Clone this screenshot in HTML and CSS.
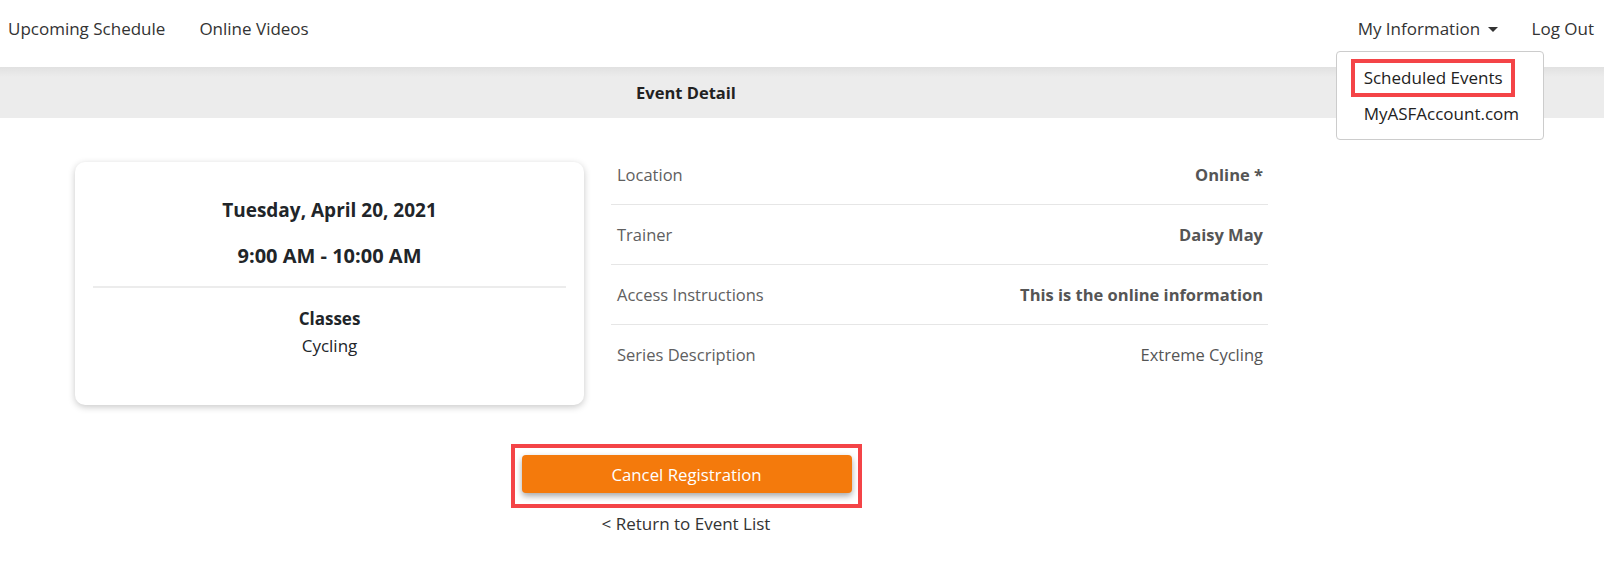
FILE: index.html
```html
<!DOCTYPE html>
<html lang="en">

<head>
    <meta charset="UTF-8">
    <meta name="viewport" content="width=device-width, initial-scale=1.0">
    <title>Event Detail</title>
    <link rel="stylesheet" href="styles.css">
</head>

<body>
    <nav class="topbar">
        <div class="nav-left">
            <a href="#" class="nav-link">Upcoming Schedule</a>
            <a href="#" class="nav-link">Online Videos</a>
        </div>
        <div class="nav-right">
            <div class="nav-menu">
                <a href="#" class="nav-link">My Information <span class="caret"></span></a>
                <div class="dropdown">
                    <div class="highlight highlight-menu">
                        <a href="#" class="dropdown-item">Scheduled Events</a>
                    </div>
                    <a href="#" class="dropdown-item">MyASFAccount.com</a>
                </div>
            </div>
            <a href="#" class="nav-link">Log Out</a>
        </div>
    </nav>

    <header class="page-title">
        <div class="container">
            <h1 class="page-title-text">Event Detail</h1>
        </div>
    </header>

    <main class="container">
        <div class="detail-row">
            <div class="event-card">
                <div class="event-date">Tuesday, April 20, 2021</div>
                <div class="event-time">9:00 AM - 10:00 AM</div>
                <hr class="card-divider">
                <div class="event-type">Classes</div>
                <div class="event-name">Cycling</div>
            </div>

            <table class="info-table">
                <tr>
                    <td class="info-label">Location</td>
                    <td class="info-value strong">Online *</td>
                </tr>
                <tr>
                    <td class="info-label">Trainer</td>
                    <td class="info-value strong">Daisy May</td>
                </tr>
                <tr>
                    <td class="info-label">Access Instructions</td>
                    <td class="info-value strong">This is the online information</td>
                </tr>
                <tr>
                    <td class="info-label">Series Description</td>
                    <td class="info-value">Extreme Cycling</td>
                </tr>
            </table>
        </div>

        <div class="actions">
            <div class="highlight highlight-btn">
                <button type="button" class="cancel-btn">Cancel Registration</button>
            </div>
            <a href="#" class="return-link">&lt; Return to Event List</a>
        </div>
    </main>
</body>

</html>
```

FILE: styles.css
```css
body {
    margin: 0;
    font-family: "Open Sans", "Noto Sans", sans-serif;
    font-size: 17px;
    color: #333;
    background: #fff;
}

a {
    color: inherit;
    text-decoration: none;
}

.topbar {
    height: 56px;
    display: flex;
    justify-content: space-between;
    align-items: center;
    padding: 0 10px 0 8px;
}

.nav-left,
.nav-right {
    display: flex;
    align-items: center;
    gap: 34px;
}

.nav-link {
    color: #333;
    white-space: nowrap;
}

.nav-menu {
    position: relative;
}

.caret {
    display: inline-block;
    width: 0;
    height: 0;
    margin-left: 3px;
    vertical-align: 3px;
    border-left: 5px solid transparent;
    border-right: 5px solid transparent;
    border-top: 5px solid #333;
}

.dropdown {
    position: absolute;
    top: 34px;
    left: -22px;
    width: 206px;
    padding: 7px 0 8px;
    background: #fff;
    border: 1px solid #ccc;
    border-radius: 4px;
    z-index: 10;
}

.dropdown-item {
    display: block;
    padding: 6px 27px;
    line-height: 22px;
    color: #222;
    white-space: nowrap;
}

.highlight {
    border: 4px solid #f44447;
}

.highlight-menu {
    margin: 0 28px 0 14px;
}

.highlight-menu .dropdown-item {
    padding: 4px 9px;
    line-height: 22px;
}

.container {
    width: 1222px;
    margin-left: 75px;
}

.page-title {
    margin-top: 11px;
    height: 51px;
    display: flex;
    align-items: center;
    background: linear-gradient(#e1e1e1, #ececec 10px);
}

.page-title-text {
    margin: 0;
    text-align: center;
    font-size: 16.5px;
    font-weight: 700;
    color: #222;
}

.detail-row {
    display: flex;
    align-items: flex-start;
    gap: 27px;
    margin-top: 27px;
}

.event-card {
    width: 509px;
    box-sizing: border-box;
    margin-top: 17px;
    padding: 34px 18px 46px;
    border-radius: 10px;
    box-shadow: 0 2px 7px rgba(0, 0, 0, 0.22);
    text-align: center;
    color: #212529;
}

.event-date,
.event-time {
    font-size: 19px;
    font-weight: 700;
    line-height: 28px;
}

.event-time {
    margin-top: 18px;
    font-size: 20px;
}

.card-divider {
    margin: 16px 0 17px;
    border: 0;
    border-top: 2px solid #ececec;
}

.event-type {
    font-weight: 700;
    line-height: 27px;
}

.event-name {
    line-height: 27px;
}

.info-table {
    width: 657px;
    border-collapse: collapse;
    font-size: 16.5px;
    color: #555;
}

.info-table td {
    height: 59px;
    padding: 0 5px 0 6px;
    border-bottom: 1px solid #e6e6e6;
}

.info-table tr:last-child td {
    border-bottom: 0;
}

.info-label {
    color: #606060;
}

.info-value {
    text-align: right;
}

.strong {
    font-weight: 700;
}

.actions {
    display: flex;
    flex-direction: column;
    align-items: center;
    margin-top: 39px;
}

.highlight-btn {
    padding: 7px 6px 11px 7px;
}

.cancel-btn {
    width: 330px;
    height: 38px;
    border: 0;
    border-radius: 4px;
    background: #f47a0c;
    color: #fff;
    font-family: inherit;
    font-size: 16.8px;
    box-shadow: 0 3px 6px rgba(0, 0, 0, 0.35);
    cursor: pointer;
}

.return-link {
    margin-top: 4px;
    color: #333;
}
```
